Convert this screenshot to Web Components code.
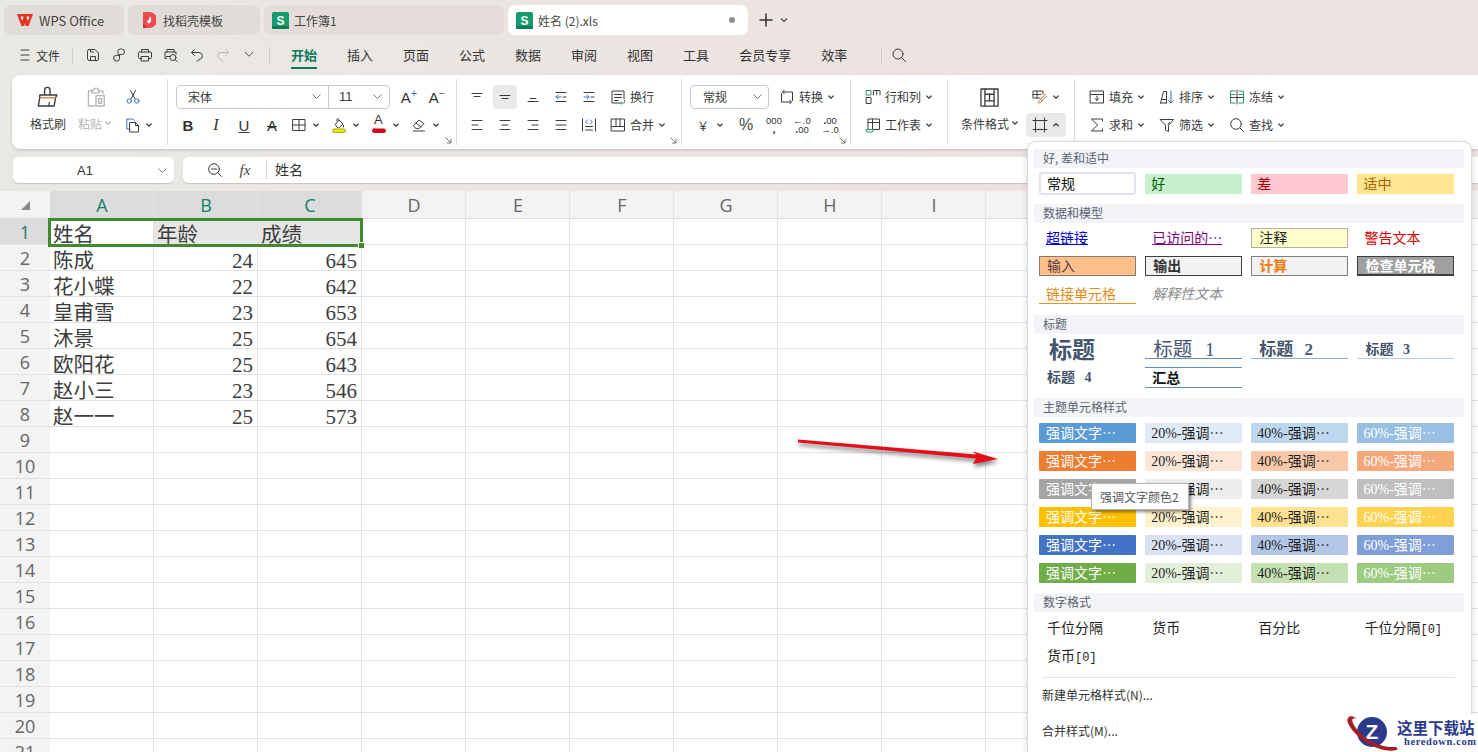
<!DOCTYPE html>
<html lang="zh-CN">
<head>
<meta charset="utf-8">
<title>姓名 (2).xls</title>
<style>
  html, body { margin: 0; height: 752px; overflow: hidden; }
  body {
    position: relative;
    font-family: "Noto Sans CJK SC", sans-serif;
    background: linear-gradient(90deg, #e9e9e4 0%, #ebe6e2 30%, #ede3e0 70%, #eee4e2 100%);
  }
</style>
</head>
<body>
<wps-tabbar></wps-tabbar>
<wps-menubar></wps-menubar>
<wps-ribbon></wps-ribbon>
<wps-formula></wps-formula>
<wps-sheet></wps-sheet>
<wps-style-panel></wps-style-panel>
<red-arrow></red-arrow>
<site-mark></site-mark>

<script>
const UI_FONT = `"Noto Sans CJK SC", "Noto Sans", sans-serif`;

// small svg helper, every icon is drawn on a 16 box
function ic(body, size = 16, col = "#3c3c3c") {
  return `<svg width="${size}" height="${size}" viewBox="0 0 16 16" fill="none" stroke="${col}" stroke-width="1" stroke-linecap="round" stroke-linejoin="round" style="flex:none;display:block">${body}</svg>`;
}
function chev(col = "#333") {
  return `<svg width="8" height="8" viewBox="0 0 8 8" fill="none" stroke="${col}" stroke-width="1.3" style="flex:none;display:block"><path d="M1.4 2.6 4 5.2l2.6-2.6"/></svg>`;
}
function chevBig() {
  return `<svg width="11" height="11" viewBox="0 0 11 11" fill="none" stroke="#777" stroke-width="1" style="flex:none"><path d="M1.5 3.5 5.5 7.5l4-4"/></svg>`;
}
const lines = (rows, col) => rows.map(r => `<path d="M${r[0]} ${r[2]}H${r[1]}"${col ? ` stroke="${col}"` : ""}/>`).join("");
const BLUE = "#3f6fc0";
const GREEN = "#2e8f6a";

const ICONS = {
  painter: `<path d="M5.5 6V3a2 2 0 0 1 4 0v3"/><path d="M2 6.5h12.5l-1 2-1 6H1l1-6z"/><path d="M2.2 8.5h11" stroke="#d8904f"/><path d="M8.5 14.5l.5-2.5" stroke-width=".9"/>`,
  paste: `<path d="M5 3.5H2.5v11H7M10 3.5h3v2"/><path d="M5 5V3h1.5a1.500 1.500 0 0 1 3 0H10v2z"/><rect x="8" y="7" width="6" height="7.5"/><rect x="10" y="9" width="2" height="3.5"/>`,
  cut: `<path d="M5.5 1.5 10 10M10.5 1.5 6 10"/><circle cx="4.2" cy="12" r="2.2" stroke="${BLUE}"/><circle cx="11.8" cy="12" r="2.2" stroke="${BLUE}"/>`,
  copy: `<path d="M5 12H1.8V2h6l2 2" stroke="${BLUE}"/><path d="M5 5.5h5.5l3 3V15H5zM10.5 5.5v3h3"/>`,
  borders: `<rect x="2" y="2.5" width="12" height="11"/><path d="M8 2.5v11M2 8h12"/>`,
  fill: `<path d="M4.5 7 8 3l4 4-3.500 3.500a1.600 1.600 0 0 1-2.200 0z"/><path d="M6 4.200a1.500 1.500 0 0 1 2-2.200"/><path d="M12.500 8.500v1.500"/><rect x="1.5" y="12" width="13" height="3.4" rx="1.5" fill="#f2ef00" stroke="#a8a620"/>`,
  color: `<rect x="1.5" y="12" width="13" height="3.4" rx="1.5" fill="#e2001a" stroke="#c40016"/>`,
  eraser: `<path d="m2.5 8.500 5.500-5.500 5 3.600-5 5H5.500z"/><path d="m5 6.200 5 3.600"/><path d="M2.500 14h11"/>`,
  alignTop: lines([[3, 13, 4.5], [5, 11, 7.5]]),
  alignMid: lines([[3, 13, 6.5], [5, 11, 9.5]]),
  alignBot: lines([[5, 11, 9.5], [3, 13, 12.5]]),
  indentL: lines([[3, 13, 3.5], [10, 13, 8], [3, 13, 12.5]]) + `<path d="M8 8H3l2-2M3 8l2 2" stroke="${BLUE}"/>`,
  indentR: lines([[3, 13, 3.5], [10, 13, 8], [3, 13, 12.5]]) + `<path d="M3 8h5L6 6M8 8l-2 2" stroke="${BLUE}"/>`,
  left: lines([[3, 13, 3.5], [3, 9, 8], [3, 13, 12.5]]),
  center: lines([[3, 13, 3.5], [5, 11, 8], [3, 13, 12.5]]),
  right: lines([[3, 13, 3.5], [7, 13, 8], [3, 13, 12.5]]),
  justify: lines([[3, 13, 3.5], [3, 13, 8], [3, 13, 12.5]]),
  distrib: `<path d="M1.5 2v12M14.5 2v12M4.5 9.5h7M4.5 13h7"/><path d="M6.5 3 4.600 5l1.900 2M9.500 3l1.900 2-1.900 2" stroke="${BLUE}"/>`,
  wrap: `<path d="M10 14H2V2h12v8M4.5 5.5h7M4.5 8.5h7M4.5 11.5H8"/><path d="M14.500 11.500v1.600a1 1 0 0 1-1 1H10.500l1.300-1.200m-1.300 1.200 1.300 1.200" stroke="#2e9a6a"/>`,
  merge: `<rect x="1.5" y="2" width="13" height="12"/><path d="M1.5 9.5h13M6 2v7.5M10 2v7.5"/>`,
  convert: `<path d="M2.5 4.5V13H12"/><path d="M13.5 11.5V3H4"/><path d="M5.200 1.200 3.500 3l1.700 1.800M10.800 11.200 12.500 13l-1.700 1.800"/>`,
  rowcol: `<rect x="1.5" y="1.5" width="4.5" height="4.5" stroke="${GREEN}"/><rect x="1.5" y="8.5" width="4.5" height="6"/><path d="M8.5 6V1.5H15V6M11.700 1.500V6"/>`,
  sheet: `<path d="M3 12V2h11.500v10.500H8.500M3 5.500h11.500M7.500 2v10.500"/><path d="M1.500 12.500h7L7.500 15h-5z" stroke="${GREEN}"/>`,
  cond: `<path d="M1.500 1.500h13v13h-13zM4.500 1.500v13M11.500 1.500v13M4.500 5.500h7M4.500 10.500h7M1.500 5v6M14.500 5v6"/><path d="M8 5.500v5"/>`,
  cellstyle: `<path d="M9 9H2V2h10v3M2 5.500h8M6 2v7"/><path d="M14.500 5 9.500 10.500l1.500 1.600L15.500 7M9.500 10.500c-1.300.3-1.700 1.400-2 3.400 1.700 0 3-.5 3.500-1.800" stroke="#c77a3a"/>`,
  crop: `<path d="M3.500 1v14M12.500 1v14M1 3.500h14M1 12.500h14"/>`,
  fillDown: `<rect x="1.5" y="2" width="13" height="12"/><path d="M1.5 5.5h13"/><path d="M8 7v4.500M6 9.500l2 2 2-2"/>`,
  sortIc: `<path d="M1.500 14 4.500 2.500h3V14M3 10.500h4.500M1.500 14h6"/><path d="M12 2v12M9.500 11.500 12 14l2.500-2.500" stroke="${BLUE}"/>`,
  freeze: `<path d="M6 2H1.500v12H6M10 2h4.500v12H10M1.500 5.500H6M10 5.500h4.500" stroke="${GREEN}"/><path d="M8 1v14M1.500 8.500h13"/>`,
  sum: `<path d="M13.500 4V2h-11l6 6-6 6h11v-2"/>`,
  filterIc: `<path d="M1.500 2.500h13l-5 6v6l-3-1.500V8.500zM10.500 5.500 9 7.500"/>`,
  find: `<circle cx="7" cy="7" r="5.3"/><path d="m11 11 3.500 3.500"/>`
};

class WpsTab extends HTMLElement {
  constructor() {
    super();
    this.attachShadow({ mode: "open" });
    this.shadowRoot.innerHTML = `
      <style>
        :host {
          display: flex;
          align-items: center;
          gap: 5px;
          box-sizing: border-box;
          height: 30px;
          padding-left: 12px;
          background: #e0dcd8;
          border-radius: 7px;
          font: 12px ${UI_FONT};
          color: #444;
          white-space: nowrap;
        }
        :host([active]) { background: #fff; }
        .grow { flex: 1; }
        .dot { width: 6px; height: 6px; border-radius: 50%; background: #8e8e8e; margin-right: 13px; display: none; }
        :host([active]) .dot { display: block; }
      </style>
      <slot name="icon"></slot>
      <slot></slot>
      <span class="grow"></span>
      <span class="dot"></span>
    `;
  }
}
customElements.define("wps-tab", WpsTab);

const sheetIcon = `<svg slot="icon" width="17" height="17" viewBox="0 0 17 17" style="flex:none"><rect width="17" height="17" rx="2" fill="#159b6e"/><rect y="14" width="17" height="3" rx="1" fill="#0d7d58"/><text x="8.5" y="12.5" text-anchor="middle" font-family="Liberation Sans" font-weight="700" font-size="12" fill="#fff">S</text></svg>`;

class WpsTabbar extends HTMLElement {
  constructor() {
    super();
    this.attachShadow({ mode: "open" });
    this.shadowRoot.innerHTML = `
      <style>
        :host { display: flex; align-items: center; gap: 4px; box-sizing: border-box; height: 40px; padding: 0 0 0 4px; }
        wps-tab.a { width: 120px; font-size: 13px; }
        wps-tab.b { width: 132px; padding-left: 14px; gap: 7px; }
        wps-tab.c { width: 240px; padding-left: 8px; background: #e3dcd8; }
        wps-tab.d { width: 240px; padding-left: 8px; }
        .add { display: flex; align-items: center; margin-left: 6px; gap: 6px; }
      </style>
      <wps-tab class="a">
        <svg slot="icon" width="18" height="14" viewBox="0 0 18 14" style="flex:none"><path d="M1 1h16l-4.500 12H9.800L9 10 8.200 13H5.500z" fill="#e8321f"/><path d="M4.500 3.500h3L6.300 8zM10.500 3.500h3L11.700 8z" fill="#fff"/></svg>
        WPS Office
      </wps-tab>
      <wps-tab class="b">
        <svg slot="icon" width="14" height="18" viewBox="0 0 14 18" style="flex:none"><path d="M1 1h6a7 7 0 0 1 0 16H1z" fill="#ec4a4e"/><path d="M1 13l3 2v2H1z" fill="#c9343a"/><path d="M8 5c.8 2 1.800 3 1 5.200-.5 1.200-1.500 2-2.500 2.300-1.200-.8-1.700-1.800-1.200-3.500.4 1 .9 1 1.200.5C7 8.500 7.300 7 8 5z" fill="#fff"/></svg>
        找稻壳模板
      </wps-tab>
      <wps-tab class="c">${sheetIcon}工作簿1</wps-tab>
      <wps-tab class="d" active>${sheetIcon}姓名 (2).xls</wps-tab>
      <span class="add">
        <svg width="16" height="16" viewBox="0 0 16 16" stroke="#333" stroke-width="1.5"><path d="M8 1.500v13M1.500 8h13"/></svg>
        <svg width="8" height="8" viewBox="0 0 8 8" fill="none" stroke="#444" stroke-width="1.1"><path d="M1 2.500 4 5.500l3-3"/></svg>
      </span>
    `;
  }
}
customElements.define("wps-tabbar", WpsTabbar);

class WpsMenubar extends HTMLElement {
  constructor() {
    super();
    this.attachShadow({ mode: "open" });
    const tabs = ["开始", "插入", "页面", "公式", "数据", "审阅", "视图", "工具", "会员专享", "效率"];
    const tools = [
      `<path d="M2.500 4a1.500 1.500 0 0 1 1.500-1.500h6l3.500 3.500v6a1.500 1.500 0 0 1-1.500 1.500H4A1.500 1.500 0 0 1 2.500 12zM5.500 13.500v-4h5v4M5.500 2.500v2.500h3"/>`,
      `<path d="M7 6.500V4.300A2.300 2.300 0 0 1 9.300 2h1.400a2.800 2.800 0 0 1 0 5.600H7.500M8.500 8.500v3.200A2.300 2.300 0 0 1 6.200 14H5.300a2.800 2.800 0 0 1 0-5.600h3"/>`,
      `<path d="M4.500 5V2.500h7V5M4.500 11.500h-2a1 1 0 0 1-1-1V6a1 1 0 0 1 1-1h11a1 1 0 0 1 1 1v4.500a1 1 0 0 1-1 1h-2M4.500 9.500h7v4.500h-7z"/>`,
      `<path d="M4 5V2.500h7V5M3.500 11.500h-1.500V5h11v2M3.500 9.500H7"/><circle cx="10" cy="10.500" r="3"/><path d="m12.200 12.700 2 2"/>`,
      `<path d="M5.500 2.500 2.500 5.500l3 3M2.500 5.500H10a3.500 3.500 0 0 1 1 6.800L8 14"/>`
    ];
    const redo = `<path d="M10.500 2.500l3 3-3 3M13.500 5.500H6a3.500 3.500 0 0 0-1 6.800L8 14"/>`;
    this.shadowRoot.innerHTML = `
      <style>
        :host { display: flex; align-items: center; box-sizing: border-box; height: 34px; padding: 0 0 4px 18px; font: 13px ${UI_FONT}; color: #333; }
        .file { display: flex; align-items: center; gap: 2px; font-size: 12px; width: 54px; }
        .sep { width: 1px; height: 17px; background: #cfcbc8; flex: none; }
        .tool { width: 26px; display: flex; justify-content: center; flex: none; }
        .tools { display: flex; padding: 0 7px 0 7px; }
        .tabs { display: flex; gap: 30px; padding: 0 34px 0 21px; }
        .tabs span { position: relative; line-height: 26px; }
        .tabs .on { color: #0e7a5f; font-weight: 700; }
        .tabs .on::after { content: ""; position: absolute; left: 0; right: 0; bottom: -1px; height: 2px; background: #0e7a5f; }
        .find { margin-left: 9px; }
      </style>
      <span class="file">${ic(`<path d="M3 3h8M3 8h8M3 13h8"/>`)}<span>文件</span></span>
      <span class="sep"></span>
      <span class="tools">
        ${tools.map(t => `<span class="tool">${ic(t)}</span>`).join("")}
        <span class="tool">${ic(redo, 16, "#bdbbb9")}</span>
        <span class="tool">${ic(`<path d="M3.500 6 8 10.500 12.500 6"/>`, 14)}</span>
      </span>
      <span class="sep"></span>
      <span class="tabs">${tabs.map((t, i) => `<span class="${i === 0 ? "on" : ""}">${t}</span>`).join("")}</span>
      <span class="sep"></span>
      <span class="find">${ic(`<circle cx="7" cy="7" r="5"/><path d="m10.800 10.800 4 4"/>`)}</span>
    `;
  }
}
customElements.define("wps-menubar", WpsMenubar);

class WpsRibbon extends HTMLElement {
  constructor() {
    super();
    this.attachShadow({ mode: "open" });
    const launcher = `<svg class="lau" width="7" height="7" viewBox="0 0 7 7" fill="none" stroke="#666" stroke-width=".9"><path d="M.5.5 6 6M2 6h4V2"/></svg>`;
    const s = (name, cls = "") => `<span class="b s ${cls}">${ic(ICONS[name])}</span>`;
    const txt = (name, label, hasChev, cls = "") =>
      `<span class="b t ${cls}">${ic(ICONS[name])}<span class="lb">${label}</span>${hasChev ? chev() : ""}</span>`;
    const drop = (inner) => `<span class="b d">${inner}${chev()}</span>`;
    this.shadowRoot.innerHTML = `
      <style>
        :host {
          display: flex;
          box-sizing: border-box;
          height: 74px;
          margin: 1px 0 0 12px;
          background: #fff;
          border-radius: 8px 0 0 8px;
          box-shadow: 0 1px 3px rgba(0,0,0,.18);
          font: 12px ${UI_FONT};
          color: #3a3a3a;
        }
        .g {
          position: relative;
          box-sizing: border-box;
          height: 66px;
          margin-top: 4px;
          padding-top: 4px;
          border-right: 1px solid #dcdcdc;
          flex: none;
        }
        .g:last-child { border-right: 0; flex: 1; }
        .lau { position: absolute; right: 4px; bottom: 1px; }
        .r { display: flex; align-items: center; height: 28px; box-sizing: border-box; }
        .b { display: flex; align-items: center; height: 24px; flex: none; }
        .s { width: 24px; margin: 0 2px; justify-content: center; border-radius: 4px; }
        .on { background: #e9e9e9; }
        .t { gap: 4px; }
        .lb { padding-bottom: 2px; }
        .d { width: 40px; padding-left: 5px; box-sizing: border-box; gap: 5px; }
        .letter { font: 15px "Liberation Sans", sans-serif; color: #333; position: relative; }
        .sel {
          display: flex;
          align-items: center;
          box-sizing: border-box;
          height: 24px;
          border: 1px solid #c9c9c9;
          border-radius: 4px;
          background: #fff;
        }
        .sel > span { display: flex; align-items: center; justify-content: space-between; box-sizing: border-box; height: 100%; padding-bottom: 2px !important; }
        .g1 { width: 156px; display: flex; padding-left: 18px; }
        .g1 .col { width: 36px; }
        .g1 .col1 { margin-right: 12px; }
        .col .r:first-child { justify-content: center; }
        .lbl { white-space: nowrap; padding-bottom: 4px; }
        .dim { color: #b5b5b5; }
        .col3 { margin-left: 11px; }
        .g2 { width: 289px; padding-left: 8px; }
        .g2 .r2 { margin-left: -2px; }
        .g3 { width: 225px; padding-left: 6px; }
        .g4 { width: 169px; padding-left: 8px; }
        .g5 { width: 97px; padding-left: 14px; }
        .g6 { width: 127px; padding-left: 13px; display: flex; }
        .g7 { padding-left: 14px; }
        .g7 .t { width: 70px; }
        .num { font: 9.5px "Liberation Sans", sans-serif; line-height: 9px; text-align: center; color: #333; white-space: nowrap; }
        .num b { font-size: 11px; }
        sup { font-size: 11px; line-height: 0; color: ${BLUE}; }
      </style>

      <div class="g g1">
        <div class="col col1">
          <div class="r">${ic(ICONS.painter, 22)}</div>
          <div class="r lbl">格式刷</div>
        </div>
        <div class="col dim">
          <div class="r">${ic(ICONS.paste, 22, "#b5b5b5")}</div>
          <div class="r lbl" style="gap:2px">粘贴${chev("#b5b5b5")}</div>
        </div>
        <div class="col3">
          <div class="r">${ic(ICONS.cut)}</div>
          <div class="r" style="gap:4px">${ic(ICONS.copy)}${chev()}</div>
        </div>
      </div>

      <div class="g g2">
        <div class="r">
          <div class="sel">
            <span style="width:152px;padding:0 6px 0 11px;border-right:1px solid #c9c9c9">宋体${chevBig()}</span>
            <span style="width:60px;padding:0 6px 0 10px;font-family:'Liberation Sans',sans-serif;font-size:13px">11${chevBig()}</span>
          </div>
          <span class="b s" style="margin-left:6px;width:26px"><span class="letter">A<sup>+</sup></span></span>
          <span class="b s" style="width:26px;margin-left:0"><span class="letter">A<sup>−</sup></span></span>
        </div>
        <div class="r r2">
          <span class="b s"><span class="letter" style="font-weight:700">B</span></span>
          <span class="b s"><span class="letter" style="font-style:italic;font-family:'Liberation Serif',serif;font-size:16px">I</span></span>
          <span class="b s"><span class="letter" style="text-decoration:underline">U</span></span>
          <span class="b s"><span class="letter" style="text-decoration:line-through;font-weight:400">A</span></span>
          ${drop(ic(ICONS.borders))}
          ${drop(ic(ICONS.fill))}
          <span class="b d"><span style="position:relative;display:block;width:16px;height:16px">${ic(ICONS.color)}<span class="letter" style="position:absolute;left:3px;top:-5px;font-size:13px">A</span></span>${chev()}</span>
          ${drop(ic(ICONS.eraser))}
        </div>
        ${launcher}
      </div>

      <div class="g g3">
        <div class="r">
          ${s("alignTop")}${s("alignMid", "on")}${s("alignBot")}${s("indentL")}${s("indentR")}
          <span style="width:7px"></span>${txt("wrap", "换行")}
        </div>
        <div class="r">
          ${s("left")}${s("center")}${s("right")}${s("justify")}${s("distrib")}
          <span style="width:7px"></span>${txt("merge", "合并", true)}
        </div>
        ${launcher}
      </div>

      <div class="g g4">
        <div class="r">
          <div class="sel" style="width:79px"><span style="width:100%;padding:0 5px 0 12px">常规${chevBig()}</span></div>
          <span style="width:10px"></span>
          ${txt("convert", "转换", true)}
        </div>
        <div class="r" style="margin-left:-1px">
          <span class="b d" style="width:43px;padding-left:6px"><span style="width:16px;text-align:center;font:15px ${UI_FONT}">￥</span>${chev()}</span>
          <span class="b s"><span style="font:16px 'Liberation Sans',sans-serif;color:#444">%</span></span>
          <span class="b s"><span class="num">000<br><b>,</b></span></span>
          <span class="b s"><span class="num">←.0<br><b>.</b>00</span></span>
          <span class="b s"><span class="num"><b>.</b>00<br>→.0</span></span>
        </div>
        ${launcher}
      </div>

      <div class="g g5">
        <div class="r">${txt("rowcol", "行和列", true)}</div>
        <div class="r">${txt("sheet", "工作表", true)}</div>
      </div>

      <div class="g g6">
        <div style="width:65px">
          <div class="r" style="padding-left:18px">${ic(ICONS.cond, 21)}</div>
          <div class="r lbl" style="gap:2px">条件格式${chev()}</div>
        </div>
        <div>
          <div class="r">${drop(ic(ICONS.cellstyle))}</div>
          <div class="r"><span class="b d on" style="border-radius:4px;padding-left:6px;gap:4px">${ic(ICONS.crop)}<svg width="8" height="8" viewBox="0 0 8 8" fill="none" stroke="#333" stroke-width="1.3"><path d="M1.4 5.2 4 2.6l2.6 2.6"/></svg></span></div>
        </div>
      </div>

      <div class="g g7">
        <div class="r">${txt("fillDown", "填充", true)}${txt("sortIc", "排序", true)}${txt("freeze", "冻结", true)}</div>
        <div class="r">${txt("sum", "求和", true)}${txt("filterIc", "筛选", true)}${txt("find", "查找", true)}</div>
      </div>
    `;
  }
}
customElements.define("wps-ribbon", WpsRibbon);

class WpsFormula extends HTMLElement {
  constructor() {
    super();
    this.attachShadow({ mode: "open" });
    this.shadowRoot.innerHTML = `
      <style>
        :host { display: flex; gap: 9px; height: 26px; margin: 8px 0 8px 13px; font: 13px ${UI_FONT}; color: #333; }
        .box { display: flex; align-items: center; background: #fff; border-radius: 5px; box-shadow: 0 1px 1px rgba(0,0,0,.16); }
        .name { width: 161px; flex: none; justify-content: space-between; box-sizing: border-box; padding: 0 6px 0 64px; font-family: "Liberation Sans", sans-serif; }
        .bar { flex: 1; border-radius: 5px 0 0 5px; padding-left: 24px; }
        .fx { width: 32px; text-align: center; font: italic 15px "Liberation Serif", serif; margin-left: 6px; color: #444; }
        .sep { width: 1px; height: 18px; background: #d4d4d4; margin: 0 8px 0 5px; }
        .val { font-size: 14px; padding-bottom: 3px; }
      </style>
      <div class="box name">A1${chevBig()}</div>
      <div class="box bar">
        ${ic(`<circle cx="7" cy="7" r="5.3"/><path d="m11 11 3.500 3.500M4.500 7h5"/>`)}
        <span class="fx">fx</span>
        <span class="sep"></span>
        <span class="val">姓名</span>
      </div>
    `;
  }
}
customElements.define("wps-formula", WpsFormula);

class WpsSheet extends HTMLElement {
  constructor() {
    super();
    this.attachShadow({ mode: "open" });
    const data = [
      ["姓名", "年龄", "成绩"], ["陈成", 24, 645], ["花小蝶", 22, 642], ["皇甫雪", 23, 653],
      ["沐景", 25, 654], ["欧阳花", 25, 643], ["赵小三", 23, 546], ["赵一一", 25, 573]
    ];
    const cols = "ABCDEFGHIJKLMN".split("");
    let html = `<div class="corner"><i></i></div>`;
    cols.forEach((c, i) => { html += `<div class="ch ${i < 3 ? "sel" : ""}">${c}</div>`; });
    for (let r = 0; r < 21; r++) {
      html += `<div class="rh ${r === 0 ? "sel" : ""}">${r + 1}</div>`;
      cols.forEach((c, i) => {
        const v = data[r] && data[r][i] !== undefined ? data[r][i] : "";
        const cls = [typeof v === "number" ? "n" : "", r === 0 && i > 0 && i < 3 ? "hl" : ""].join(" ");
        html += `<div class="c ${cls}">${v}</div>`;
      });
    }
    this.shadowRoot.innerHTML = `
      <style>
        :host { display: block; position: relative; height: 561px; overflow: hidden; background: #fff; }
        .grid { display: grid; grid-template-columns: 50px repeat(14, 104px); grid-template-rows: 28px; grid-auto-rows: 26px; }
        .corner, .ch, .rh { background: #f3f3f3; box-sizing: border-box; color: #666; display: flex; align-items: center; justify-content: center; font: 18px "Open Sans", "Noto Sans", sans-serif; }
        .corner { border-bottom: 1px solid #dedede; }
        .corner i { width: 0; height: 0; border-left: 9px solid transparent; border-bottom: 9px solid #8a8a8a; margin-top: 2px; }
        .ch { border-right: 1px solid #e2e2e2; border-bottom: 1px solid #dedede; padding-left: 1px; }
        .rh { border-bottom: 1px solid #e2e2e2; }
        .sel { background: #dcdcdc; color: #13806a; }
        .c {
          box-sizing: border-box;
          border-right: 1px solid #e2e2e2;
          border-bottom: 1px solid #e2e2e2;
          padding: 0 4px 0 3px;
          font: 20.5px/32px "Liberation Serif", "Noto Sans CJK SC", serif;
          color: #3d3d3d;
          white-space: nowrap;
          overflow: visible;
        }
        .n { text-align: right; font-size: 21px; }
        .hl { background: #e6e6e6; }
        .range { position: absolute; left: 48px; top: 27px; width: 315px; height: 29px; box-sizing: border-box; border: 3px solid #3f8a2a; pointer-events: none; }
        .range::after { content: ""; position: absolute; right: -5px; bottom: -5px; width: 5px; height: 5px; background: #3f8a2a; border: 1px solid #fff; }
      </style>
      <div class="grid">${html}</div>
      <div class="range"></div>
    `;
  }
}
customElements.define("wps-sheet", WpsSheet);

class StyleChip extends HTMLElement {
  constructor() {
    super();
    this.attachShadow({ mode: "open" });
    this.shadowRoot.innerHTML = `
      <style>
        :host {
          display: flex;
          align-items: center;
          box-sizing: border-box;
          height: 20px;
          padding: 0 0 2px 6px;
          font: 14px "Liberation Serif", "Noto Sans CJK SC", sans-serif;
          color: #1e1e1e;
          white-space: nowrap;
          overflow: hidden;
        }
      </style>
      <slot></slot>
    `;
  }
}
customElements.define("style-chip", StyleChip);

class WpsStylePanel extends HTMLElement {
  constructor() {
    super();
    this.attachShadow({ mode: "open" });
    const chip = (text, style = "") => `<style-chip style="${style}"><span>${text}</span></style-chip>`;
    // the ellipsis has to come from the CJK font, there it sits at mid height
    const dots = `<span style="font-family:'Noto Sans CJK SC',sans-serif">…</span>`;
    const z = `<span style="font:12px 'Liberation Mono',monospace">[0]</span>`;
    const accents = [
      ["#5b9bd5", "#deebf7", "#bdd7ee", "#98bfe4"],
      ["#ed7d31", "#fbe5d6", "#f8c8a8", "#f4a97c"],
      ["#a5a5a5", "#ededed", "#d6d6d6", "#bfbfbf"],
      ["#ffc000", "#fff2cc", "#ffe291", "#ffd350"],
      ["#4472c4", "#d9e2f3", "#b4c6e7", "#7f9fd9"],
      ["#70ad47", "#e2efd9", "#c5e0b3", "#9dcb82"]
    ];
    const theme = accents.map(a =>
      chip(`强调文字${dots}`, `background:${a[0]};color:#fff;padding-left:7px;border-radius:1px`) +
      chip(`20%-强调${dots}`, `background:${a[1]};border-radius:1px`) +
      chip(`40%-强调${dots}`, `background:${a[2]};border-radius:1px`) +
      chip(`60%-强调${dots}`, `background:${a[3]};color:#fff;border-radius:1px`)
    ).join("");
    const H = "color:#44546a;font-weight:700;word-spacing:6px;padding-left:8px;";
    this.shadowRoot.innerHTML = `
      <style>
        :host {
          position: absolute;
          left: 1027px;
          top: 141px;
          width: 445px;
          height: 640px;
          box-sizing: border-box;
          padding: 7px 7px 0 6px;
          background: #fff;
          border: 1px solid #dadada;
          border-radius: 9px;
          box-shadow: 0 2px 6px rgba(0,0,0,.16);
          font: 12px ${UI_FONT};
          color: #333;
        }
        .head { height: 19px; line-height: 17px; padding-left: 9px; background: #f2f4f7; color: #5a6270; }
        .grid { display: grid; grid-template-columns: repeat(4, 96.5px); column-gap: 9.67px; row-gap: 8px; grid-auto-rows: 20px; padding: var(--pt, 5px) 0 var(--pb, 11px) 5px; }
        .line { height: 1px; background: #e4e4e4; margin: 0 9px 0 8px; }
        .item { height: 36px; line-height: 34px; padding-left: 8px; }
        .tip {
          position: absolute;
          left: 63px;
          top: 341px;
          box-sizing: border-box;
          width: 98px;
          height: 27px;
          line-height: 25px;
          padding-left: 8px;
          background: #fff;
          border: 1px solid #b5b5b5;
          box-shadow: 2px 2px 3px rgba(0,0,0,.45);
          color: #555;
          white-space: nowrap;
        }
      </style>
      <div class="head">好, 差和适中</div>
      <div class="grid" style="--pt:6px;--pb:10px">
        ${chip("常规", "background:#fff;border:2px solid #dfe4ec;border-radius:3px;height:23px;margin-top:-2px;padding-left:6px;color:#111")}
        ${chip("好", "background:#c6efce;color:#006100")}
        ${chip("差", "background:#ffc7ce;color:#9c0006")}
        ${chip("适中", "background:#ffe592;color:#9c6500")}
      </div>
      <div class="head">数据和模型</div>
      <div class="grid">
        ${chip("<u>超链接</u>", "color:#0000d0;padding-left:7px")}
        ${chip(`<u>已访问的${dots}</u>`, "color:#800080;padding-left:7px")}
        ${chip("注释", "background:#ffffcc;border:1px solid #b2b2a0;padding-left:7px")}
        ${chip("警告文本", "color:#d00000;padding-left:7px")}
        ${chip("输入", "background:#ffc08a;border:1px solid #8a7a70;color:#5a3a40;padding-left:7px")}
        ${chip("输出", "background:#f2f2f2;border:1px solid #3f3f3f;font-weight:700;color:#333;padding-left:7px")}
        ${chip("计算", "background:#f2f2f2;border:1px solid #7f7f7f;font-weight:700;color:#f07a10;padding-left:7px")}
        ${chip("检查单元格", "background:#a0a0a0;border:1px solid #3f3f3f;border-width:1px 1px 2px;font-weight:700;color:#fff;padding-left:7px")}
        ${chip("链接单元格", "color:#e88a1a;border-bottom:1px solid #f09020;padding-left:7px")}
        ${chip("解释性文本", "color:#8a8a8a;font-style:italic;padding-left:7px")}
      </div>
      <div class="head">标题</div>
      <div class="grid">
        ${chip("标题", H + "font-size:23px;padding-left:10px;overflow:visible")}
        ${chip("标题 1", H + "font-size:19.5px;font-weight:400;border-bottom:1px solid #5b8fb8;overflow:visible;word-spacing:8px")}
        ${chip("标题 2", H + "font-size:17px;border-bottom:1px solid #8fb0cc;overflow:visible;word-spacing:7px")}
        ${chip("标题 3", H + "font-size:14px;border-bottom:1px solid #b8cfe0")}
        ${chip("标题 4", H + "font-size:14px")}
        ${chip("汇总", "font-weight:700;color:#111;border-top:1px solid #5b8fb8;border-bottom:1px solid #5b8fb8;height:21px;padding-left:7px")}
      </div>
      <div class="head">主题单元格样式</div>
      <div class="grid" style="--pt:6px;--pb:10px">${theme}</div>
      <div class="head">数字格式</div>
      <div class="grid" style="--pt:6px">
        ${chip("千位分隔", "padding-left:8px")}${chip("货币", "padding-left:7px")}${chip("百分比", "padding-left:7px")}${chip(`千位分隔${z}`, "padding-left:7px")}${chip(`货币${z}`, "padding-left:8px")}
      </div>
      <div class="line"></div>
      <div class="item">新建单元格样式(N)...</div>
      <div class="item">合并样式(M)...</div>
      <div class="tip">强调文字颜色2</div>
    `;
  }
}
customElements.define("wps-style-panel", WpsStylePanel);

class RedArrow extends HTMLElement {
  constructor() {
    super();
    this.attachShadow({ mode: "open" });
    this.shadowRoot.innerHTML = `
      <style>
        :host { position: absolute; left: 790px; top: 432px; width: 220px; height: 40px; pointer-events: none; }
        svg { display: block; filter: drop-shadow(1px 3px 2px rgba(0,0,0,.5)); }
      </style>
      <svg width="220" height="40" viewBox="790 432 220 40">
        <path d="M798 439.5 976 454.5 973 451.5 998 459 973 464 976 458.5 798 442.5z" fill="#e3101c"/>
      </svg>
    `;
  }
}
customElements.define("red-arrow", RedArrow);

class SiteMark extends HTMLElement {
  constructor() {
    super();
    this.attachShadow({ mode: "open" });
    this.shadowRoot.innerHTML = `
      <style>
        :host { position: absolute; right: 0; bottom: 0; display: flex; width: 133px; height: 38px; background: #fff; }
        svg { flex: none; }
        .txt { margin-left: -1px; padding-top: 6px; white-space: nowrap; }
        .cn { font: 700 15.5px/15px "Noto Sans CJK SC", sans-serif; color: #2b3a8c; }
        .en { font: 700 10.5px/12px "Liberation Serif", serif; color: #2b3a8c; letter-spacing: .6px; padding-left: 7px; margin-top: 1px; }
      </style>
      <svg width="53" height="38" viewBox="0 0 53 38">
        <circle cx="27" cy="18" r="15" fill="#2b3a8c"/>
        <text x="27" y="25" text-anchor="middle" font-family="Liberation Sans" font-weight="700" font-size="21" fill="#fff">Z</text>
        <path d="M3 4C5 1 9 2 12 5 7 3 6 6 9 11 15 22 32 34 50 33 52 33 53 34 52 36 36 40 12 26 4 11 2 8 2 6 3 4z" fill="#a81c24"/>
      </svg>
      <div class="txt">
        <div class="cn">这里下载站</div>
        <div class="en">heredown.com</div>
      </div>
    `;
  }
}
customElements.define("site-mark", SiteMark);
</script>
</body>
</html>
